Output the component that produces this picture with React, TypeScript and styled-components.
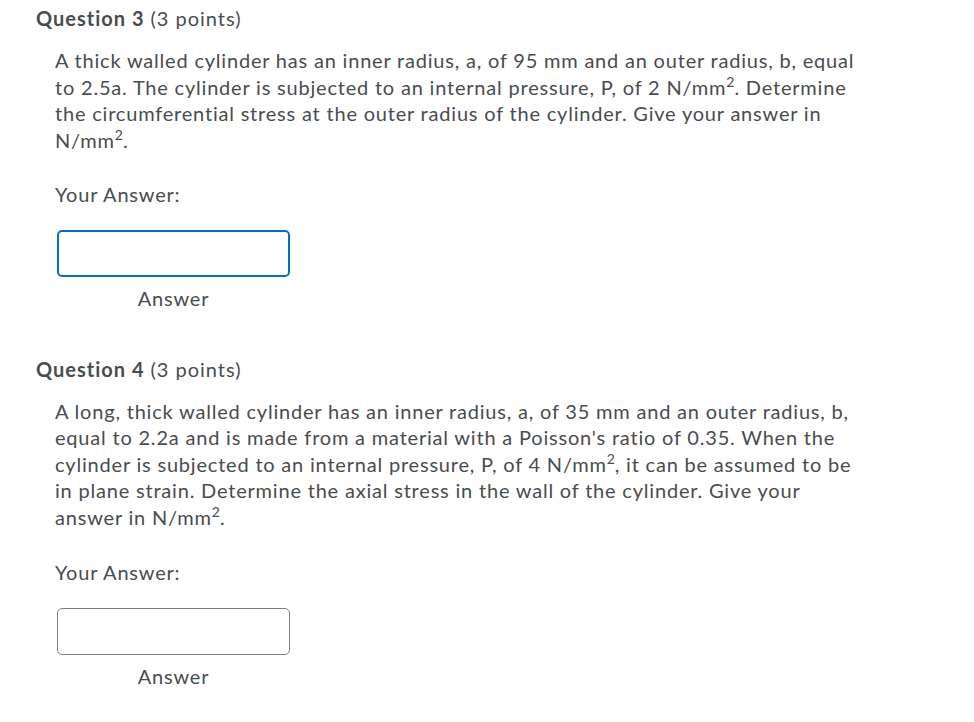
import React from "react";
import styled, { createGlobalStyle, css } from "styled-components";

const GlobalStyle = createGlobalStyle`
  html, body {
    margin: 0;
    padding: 0;
    background: #ffffff;
  }
  body {
    font-family: Lato, "Open Sans", sans-serif;
    color: #494c4e;
  }
`;

const Page = styled.div`
  padding: 6px 0 0 36px;
  width: 880px;
`;

const QuestionBlock = styled.section`
  display: flex;
  flex-direction: column;
  margin-bottom: 46px;
`;

const Heading = styled.h2`
  margin: 0;
  font-size: 20px;
  line-height: 24px;
  font-weight: 700;
  letter-spacing: 1px;
  color: #494c4e;

  span {
    font-weight: 400;
  }
`;

const Body = styled.div`
  padding-left: 19px;
  display: flex;
  flex-direction: column;
  font-size: 20px;
  line-height: 26px;
  letter-spacing: 0.8px;
`;

const Prompt = styled.p`
  margin: 17px 0 29px;
  width: 812px;
`;

const Sup = styled.sup`
  font-size: 14px;
  line-height: 18px;
  vertical-align: super;
  letter-spacing: 0;
`;

const Label = styled.div``;

const AnswerField = styled.div`
  margin: 23px 0 0 2px;
  width: 233px;
  display: flex;
  flex-direction: column;
  align-items: center;
  gap: 8px;
`;

const Input = styled.input<{ $focused?: boolean }>`
  box-sizing: border-box;
  width: 233px;
  height: 47px;
  border-radius: 5px;
  background: #ffffff;
  outline: none;
  font: inherit;
  padding: 0 10px;
  border: 1px solid #7c8084;
  ${({ $focused }) =>
    $focused &&
    css`
      border: 2px solid #006fbf;
    `}
`;

const Caption = styled.div``;

const Question = ({
  number,
  points,
  children,
  focused,
}: {
  number: number;
  points: number;
  children: React.ReactNode;
  focused?: boolean;
}) => (
  <QuestionBlock>
    <Heading>
      Question {number} <span>({points} points)</span>
    </Heading>
    <Body>
      <Prompt>{children}</Prompt>
      <Label>Your Answer:</Label>
      <AnswerField>
        <Input $focused={focused} aria-label="Answer" />
        <Caption>Answer</Caption>
      </AnswerField>
    </Body>
  </QuestionBlock>
);

export default function App() {
  return (
    <>
      <GlobalStyle />
      <Page>
        <Question number={3} points={3} focused>
          A thick walled cylinder has an inner radius, a, of 95 mm and an outer
          radius, b, equal to 2.5a. The cylinder is subjected to an internal
          pressure, P, of 2 N/mm<Sup>2</Sup>. Determine the circumferential
          stress at the outer radius of the cylinder. Give your answer in
          N/mm<Sup>2</Sup>.
        </Question>
        <Question number={4} points={3}>
          A long, thick walled cylinder has an inner radius, a, of 35 mm and an
          outer radius, b, equal to 2.2a and is made from a material with a
          Poisson's ratio of 0.35. When the cylinder is subjected to an internal
          pressure, P, of 4 N/mm<Sup>2</Sup>, it can be assumed to be in plane
          strain. Determine the axial stress in the wall of the cylinder. Give
          your answer in N/mm<Sup>2</Sup>.
        </Question>
      </Page>
    </>
  );
}
